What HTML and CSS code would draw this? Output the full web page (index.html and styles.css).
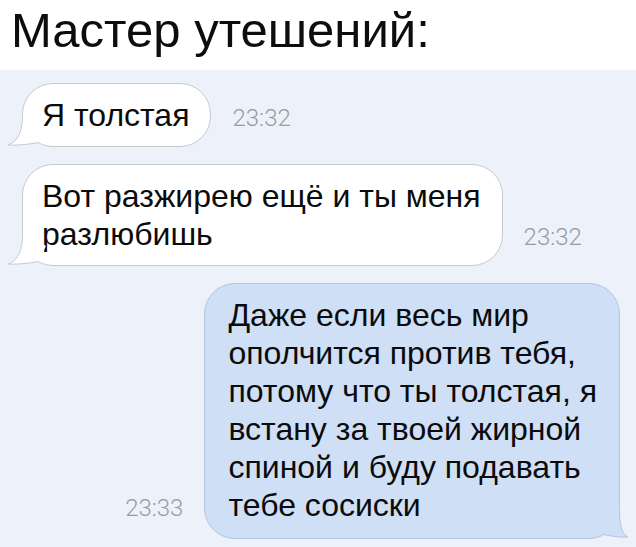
FILE: index.html
```html
<!DOCTYPE html>
<html>
<head>
	<meta charset="utf-8"/>
	<title>Мастер утешений</title>
	<link rel="stylesheet" href="styles.css">
</head>
<body>
<div class="title">Мастер утешений:</div>

<div class="chat">
	<div class="msg in">
		<div class="bubble">Я толстая<svg class="tail" width="40" height="40" viewBox="0 0 40 40">
				<path class="tail-fill" d="M16.5,8 C16.5,26 11,35 2,38 C10,38.5 22,37.5 32,35.6 L40,20 L17,6 Z"/>
				<path class="tail-line" d="M16.5,8 C16.5,26 11,35 2,38 C10,38.5 22,37.5 32,35.6"/>
			</svg></div>
		<span class="time">23:32</span>
	</div>

	<div class="msg in">
		<div class="bubble">Вот разжирею ещё и ты меня<br>разлюбишь<svg class="tail" width="40" height="40" viewBox="0 0 40 40">
				<path class="tail-fill" d="M16.5,8 C16.5,26 11,35 2,38 C10,38.5 22,37.5 32,35.6 L40,20 L17,6 Z"/>
				<path class="tail-line" d="M16.5,8 C16.5,26 11,35 2,38 C10,38.5 22,37.5 32,35.6"/>
			</svg></div>
		<span class="time">23:32</span>
	</div>

	<div class="msg out">
		<span class="time">23:33</span>
		<div class="bubble">Даже если весь мир<br>ополчится против тебя,<br>потому что ты толстая, я<br>встану за твоей жирной<br>спиной и буду подавать<br>тебе сосиски<svg class="tail" width="40" height="40" viewBox="0 0 40 40">
				<path class="tail-fill" d="M16.5,10 C16.5,27 14,35 8,38 C14,38.5 23,37.5 32,35.6 L40,20 L17,6 Z"/>
				<path class="tail-line" d="M16.5,10 C16.5,27 14,35 8,38 C14,38.5 23,37.5 32,35.6"/>
			</svg></div>
	</div>
</div>
</body>
</html>
```

FILE: styles.css
```css
	body{
		margin: 0;
		background: #edf2fa;
		font-family: "Liberation Sans", Arial, sans-serif;
		color: #111;
	}

	.title{
		height: 67px;
		padding: 3px 0 0 11px;
		background: #fff;
		font-size: 49px;
		line-height: 55px;
		color: #0d0d0d;
	}

	.chat{
		display: flex;
		flex-direction: column;
		gap: 17px;
		padding: 13px 16px 0 22px;
	}

	.msg{
		display: flex;
		align-items: last baseline;
		gap: 21px;
	}
	.msg.out{
		justify-content: flex-end;
	}

	.bubble{
		position: relative;
		font-size: 32px;
		line-height: 38px;
		border-radius: 31px;
		color: #0b0b0b;
	}
	.in .bubble{
		padding: 12px 21px 12px 19px;
		background: #fff;
		border: 1px solid #c6cad0;
	}
	.out .bubble{
		padding: 12px 22px 14px 23px;
		background: #cedff6;
		border: 1px solid #b4c5dd;
	}

	/* little hook at the lower corner */
	.tail{
		position: absolute;
		bottom: -1px;
	}
	.in .tail{
		left: -17px;
	}
	.out .tail{
		right: -17px;
		transform: scaleX(-1);
	}
	.tail-line{
		fill: none;
		stroke-width: 1;
	}
	.in .tail-fill{ fill: #fff; }
	.in .tail-line{ stroke: #c6cad0; }
	.out .tail-fill{ fill: #cedff6; }
	.out .tail-line{ stroke: #b4c5dd; }

	.time{
		font-family: Roboto, "Liberation Sans", sans-serif;
		font-weight: 300;
		font-size: 24px;
		color: #959ba2;
	}
```
